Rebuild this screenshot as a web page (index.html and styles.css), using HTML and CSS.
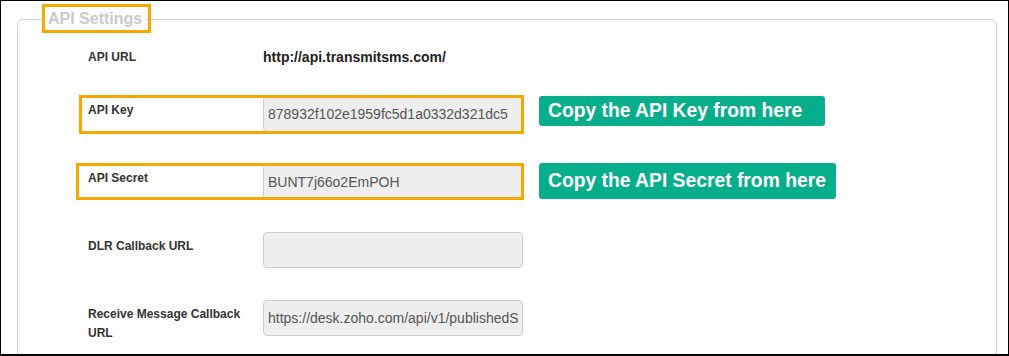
FILE: index.html
```html
<!DOCTYPE html>
<html lang="en">
<head>
    <meta charset="UTF-8">
    <meta name="viewport" content="width=device-width, initial-scale=1.0">
    <title>API Settings</title>
    <link rel="stylesheet" href="styles.css">
</head>
<body>
    <fieldset class="settings">
        <legend class="settings-title">API Settings</legend>

        <div class="row row-static">
            <label class="label">API URL</label>
            <div class="static-value">http://api.transmitsms.com/</div>
        </div>

        <div class="row">
            <span class="mark mark-key"></span>
            <label class="label" for="apiKey">API Key</label>
            <input class="field" id="apiKey" type="text" readonly value="878932f102e1959fc5d1a0332d321dc5">
            <div class="callout callout-key">Copy the API Key from here</div>
        </div>

        <div class="row">
            <span class="mark mark-secret"></span>
            <label class="label" for="apiSecret">API Secret</label>
            <input class="field" id="apiSecret" type="text" readonly value="BUNT7j66o2EmPOH">
            <div class="callout callout-secret">Copy the API Secret from here</div>
        </div>

        <div class="row">
            <label class="label" for="dlrUrl">DLR Callback URL</label>
            <input class="field" id="dlrUrl" type="text" readonly value="">
        </div>

        <div class="row">
            <label class="label" for="receiveUrl">Receive Message Callback URL</label>
            <input class="field" id="receiveUrl" type="text" readonly value="https://desk.zoho.com/api/v1/publishedSmsCallback">
        </div>
    </fieldset>
</body>
</html>
```

FILE: styles.css
```css
html, body {
    margin: 0;
    padding: 0;
}
body {
    width: 1009px;
    height: 356px;
    box-sizing: border-box;
    border: 1px solid #000;
    border-bottom-width: 2px;
    overflow: hidden;
    background-color: #fff;
    font-family: "Liberation Sans", Arial, sans-serif;
    color: #333;
    padding-top: 8px;
}
.settings {
    margin: 0 11px 0 16px;
    padding: 0 0 20px 0;
    border: 1px solid #cfcfcf;
    border-radius: 6px;
    min-width: 0;
}
.settings-title {
    position: relative;
    margin-left: 26px;
    padding: 0 4px;
    font-size: 16px;
    line-height: 20px;
    font-weight: bold;
    color: #cacaca;
}
.settings-title::after {
    content: "";
    position: absolute;
    left: -2px;
    right: -5px;
    top: -5px;
    bottom: -4px;
    border: 3px solid #f6a800;
}
.row {
    position: relative;
    display: flex;
    align-items: flex-start;
    height: 36px;
    margin-bottom: 32px;
}
.row-static {
    height: 23px;
    margin-top: 14px;
    margin-bottom: 30px;
}
.label {
    width: 160px;
    margin-left: 70px;
    margin-right: 15px;
    padding-top: 5px;
    font-size: 12px;
    line-height: 19px;
    font-weight: bold;
    color: #333;
}
.row-static .label {
    padding-top: 6px;
    line-height: 17px;
}
.static-value {
    padding-top: 6px;
    font-size: 14px;
    line-height: 17px;
    font-weight: bold;
    color: #222;
}
.field {
    width: 260px;
    height: 36px;
    box-sizing: border-box;
    margin: 0;
    padding: 0 4px;
    border: 1px solid #ccc;
    border-radius: 4px;
    background-color: #eee;
    font-family: "Liberation Sans", Arial, sans-serif;
    font-size: 14px;
    color: #555;
    outline: none;
}
.mark {
    position: absolute;
    border: 3px solid #f6a800;
    box-sizing: border-box;
    z-index: 1;
}
.mark-key {
    left: 61px;
    top: -1px;
    width: 445px;
    height: 39px;
}
.mark-secret {
    left: 58px;
    top: -1px;
    width: 448px;
    height: 37px;
}
.callout {
    margin-left: 16px;
    border-radius: 3px;
    background-color: #07ae8b;
    color: #fff;
    font-size: 19.3px;
    font-weight: bold;
    white-space: nowrap;
}
.callout-key {
    height: 30px;
    line-height: 30px;
    padding: 0 23px 0 9px;
}
.callout-secret {
    height: 36px;
    line-height: 36px;
    margin-top: -1px;
    padding: 0 10px 0 9px;
}
```
